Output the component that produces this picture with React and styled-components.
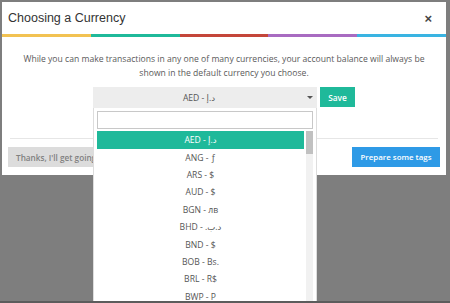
import React from 'react';
import styled, { createGlobalStyle } from 'styled-components';

const GlobalStyle = createGlobalStyle`
    html, body { margin: 0; padding: 0; }
    body { font-family: "Open Sans", "DejaVu Sans", sans-serif; }
    * { box-sizing: border-box; }
`;

const stripeColors = ['#f2c252', '#1fb99a', '#c4463a', '#a86bc1', '#3ab4e2'];

const currencies = [
    'AED - د.إ', 'ANG - ƒ', 'ARS - $', 'AUD - $', 'BGN - лв', 'BHD - .د.ب',
    'BND - $', 'BOB - Bs.', 'BRL - R$', 'BWP - P',
];

const Backdrop = styled.div`
    height: 303px;
    overflow: hidden;
    background: #7e7e7e;
    padding: 2px 4px 0 2px;
    border-bottom: 2px solid #5c5c5c;
`;

const Modal = styled.div`
    background: #fff;
    width: 444px;
`;

const Header = styled.div`
    height: 32px;
    display: flex;
    align-items: center;
    justify-content: space-between;
    padding: 0 14px 0 6px;
`;

const Title = styled.h1`
    margin: 0;
    font: 400 12.5px "Liberation Sans", Arial, sans-serif;
    color: #333;
`;

const Close = styled.span`
    font: 700 13px "Liberation Sans", Arial, sans-serif;
    color: #444;
`;

const Stripe = styled.div`
    display: flex;
    height: 3px;
`;

const StripePart = styled.div`
    flex: 1;
    background: ${props => props.color};
`;

const Body = styled.div`
    padding: 15px 10px 30px;
    text-align: center;
`;

const Intro = styled.p`
    margin: 0;
    font-size: 8.6px;
    line-height: 14px;
    color: #5a5a5a;
`;

const PickRow = styled.div`
    display: flex;
    justify-content: center;
    align-items: flex-start;
    gap: 3px;
    margin-top: 7px;
`;

const SelectWrap = styled.div`
    position: relative;
    width: 224px;
`;

const SelectBox = styled.div`
    height: 21px;
    background: #ededed;
    display: flex;
    align-items: center;
    justify-content: center;
    padding-right: 12px;
    font-size: 8.6px;
    color: #555;
`;

const Caret = styled.span`
    position: absolute;
    right: 4px;
    top: 9px;
    border-left: 3px solid transparent;
    border-right: 3px solid transparent;
    border-top: 3px solid #555;
`;

const SaveButton = styled.button`
    height: 20px;
    width: 35px;
    border: 0;
    padding: 0;
    background: #1fb99a;
    color: #fff;
    font: 600 8.3px "Open Sans", sans-serif;
`;

const Dropdown = styled.div`
    position: absolute;
    top: 21px;
    left: 0;
    width: 224px;
    background: #fff;
    border: 1px solid #ddd;
    border-top: 0;
    padding: 3px 3px 0;
`;

const Search = styled.div`
    height: 18px;
    border: 1px solid #c8c8c8;
`;

const ListArea = styled.div`
    display: flex;
    margin-top: 2px;
`;

const Options = styled.div`
    flex: 1;
    padding-right: 2px;
`;

const Option = styled.div`
    height: ${props => (props.active ? '18px' : '17.4px')};
    display: flex;
    align-items: center;
    justify-content: center;
    font-size: 8.6px;
    color: ${props => (props.active ? '#fff' : '#555')};
    background: ${props => (props.active ? '#1fb99a' : 'transparent')};
`;

const ScrollTrack = styled.div`
    width: 7px;
    background: #f1f1f1;
`;

const ScrollThumb = styled.div`
    height: 23px;
    background: #c1c1c1;
`;

const Separator = styled.div`
    height: 1px;
    margin: 0 8px;
    background: #e6e6e6;
`;

const Footer = styled.div`
    display: flex;
    justify-content: space-between;
    padding: 8px 6px 8px 6px;
`;

const FooterButton = styled.button`
    height: 20px;
    border: 0;
    padding: 0 8px;
    white-space: nowrap;
    font: 600 8.2px "Open Sans", sans-serif;
    background: ${props => (props.primary ? '#2e9ae6' : '#dcdcdc')};
    color: ${props => (props.primary ? '#fff' : '#808080')};
    width: ${props => (props.primary ? '88px' : 'auto')};
    ${props => props.primary && 'padding: 0; font-size: 7.9px;'}
`;

export default function App() {
    return (
        <Backdrop>
            <GlobalStyle />
            <Modal>
                <Header>
                    <Title>Choosing a Currency</Title>
                    <Close>×</Close>
                </Header>
                <Stripe>
                    {stripeColors.map(c => <StripePart key={c} color={c} />)}
                </Stripe>
                <Body>
                    <Intro>
                        While you can make transactions in any one of many currencies, your account balance will always be
                        shown in the default currency you choose.
                    </Intro>
                    <PickRow>
                        <SelectWrap>
                            <SelectBox>AED - د.إ</SelectBox>
                            <Caret />
                            <Dropdown>
                                <Search />
                                <ListArea>
                                    <Options>
                                        {currencies.map((c, i) => (
                                            <Option key={c} active={i === 0}>{c}</Option>
                                        ))}
                                    </Options>
                                    <ScrollTrack>
                                        <ScrollThumb />
                                    </ScrollTrack>
                                </ListArea>
                            </Dropdown>
                        </SelectWrap>
                        <SaveButton>Save</SaveButton>
                    </PickRow>
                </Body>
                <Separator />
                <Footer>
                    <FooterButton>Thanks, I'll get going</FooterButton>
                    <FooterButton primary>Prepare some tags</FooterButton>
                </Footer>
            </Modal>
        </Backdrop>
    );
}
